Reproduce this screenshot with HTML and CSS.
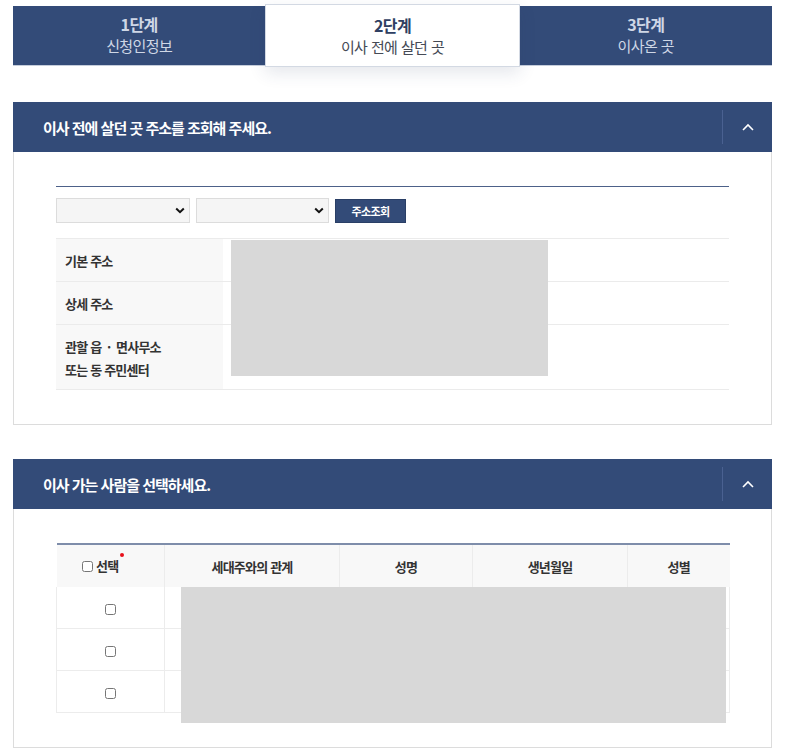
FILE: index.html
```html
<!DOCTYPE html>
<html lang="ko">
<head>
<meta charset="utf-8">
<title>전입신고</title>
<link rel="stylesheet" href="styles.css">
</head>
<body>
<div class="page">
  <ol class="steps">
    <li class="step">
      <strong class="step-no">1단계</strong>
      <span class="step-name">신청인정보</span>
    </li>
    <li class="step step-active">
      <strong class="step-no">2단계</strong>
      <span class="step-name">이사 전에 살던 곳</span>
    </li>
    <li class="step">
      <strong class="step-no">3단계</strong>
      <span class="step-name">이사온 곳</span>
    </li>
  </ol>

  <section class="panel panel-first">
    <div class="panel-head">
      <h2 class="panel-title">이사 전에 살던 곳 주소를 조회해 주세요.</h2>
      <button class="toggle" type="button" aria-label="접기">
        <svg width="12" height="8" viewBox="0 0 12 8"><path d="M1 7L6 2L11 7" fill="none" stroke="#fff" stroke-width="1.6"/></svg>
      </button>
    </div>
    <div class="panel-body">
      <div class="search-row">
        <div class="select-wrap select-a">
          <select class="select"><option></option></select>
          <svg class="select-arrow" width="10" height="7" viewBox="0 0 10 7"><path d="M1.2 1.5L5 5.2L8.8 1.5" fill="none" stroke="#111" stroke-width="2"/></svg>
        </div>
        <div class="select-wrap select-b">
          <select class="select"><option></option></select>
          <svg class="select-arrow" width="10" height="7" viewBox="0 0 10 7"><path d="M1.2 1.5L5 5.2L8.8 1.5" fill="none" stroke="#111" stroke-width="2"/></svg>
        </div>
        <button class="btn-search" type="button">주소조회</button>
      </div>
      <div class="addr-wrap">
        <table class="addr-table">
          <tr class="row-a"><th>기본 주소</th><td></td></tr>
          <tr class="row-a"><th>상세 주소</th><td></td></tr>
          <tr class="row-b"><th>관할 읍 &nbsp;·&nbsp; 면사무소<br>또는 동 주민센터</th><td></td></tr>
        </table>
        <div class="mask mask-addr"></div>
      </div>
    </div>
  </section>

  <section class="panel panel-second">
    <div class="panel-head">
      <h2 class="panel-title">이사 가는 사람을 선택하세요.</h2>
      <button class="toggle" type="button" aria-label="접기">
        <svg width="12" height="8" viewBox="0 0 12 8"><path d="M1 7L6 2L11 7" fill="none" stroke="#fff" stroke-width="1.6"/></svg>
      </button>
    </div>
    <div class="panel-body">
      <div class="people-wrap">
        <table class="people-table">
          <colgroup>
            <col class="c1"><col class="c2"><col class="c3"><col class="c4"><col class="c5">
          </colgroup>
          <thead>
            <tr>
              <th><label class="all"><input type="checkbox" class="chk chk-head"><span class="req">선택</span></label></th>
              <th>세대주와의 관계</th>
              <th>성명</th>
              <th>생년월일</th>
              <th>성별</th>
            </tr>
          </thead>
          <tbody>
            <tr><td><input type="checkbox" class="chk"></td><td></td><td></td><td></td><td></td></tr>
            <tr><td><input type="checkbox" class="chk"></td><td></td><td></td><td></td><td></td></tr>
            <tr><td><input type="checkbox" class="chk"></td><td></td><td></td><td></td><td></td></tr>
          </tbody>
        </table>
        <div class="mask mask-people"></div>
      </div>
    </div>
  </section>
</div>
</body>
</html>
```
FILE: styles.css
```css
* { box-sizing: border-box; }
html, body { margin: 0; padding: 0; background: #fff; }
body {
  font-family: "Noto Sans CJK KR", "Noto Sans", sans-serif;
  color: #333;
}
.page {
  width: 759px;
  margin: 0 0 0 13px;
  padding-top: 6px;
}

/* steps */
.steps {
  list-style: none;
  margin: 0;
  padding: 0;
  display: flex;
  height: 60px;
  background: #334b78;
  border-bottom: 1px solid #c5cddb;
}
.step {
  flex: 1 1 0;
  display: flex;
  flex-direction: column;
  align-items: center;
  padding-top: 7px;
  color: #cfd7e6;
  letter-spacing: -0.6px;
}
.step-no { font-size: 16px; font-weight: 700; line-height: 22px; }
.step-name { font-size: 15px; line-height: 22px; }
.step-active {
  margin: -2px 0 -2px 0;
  padding-top: 9px;
  background: #fff;
  border: 1px solid #d3d9e3;
  box-shadow: 0 6px 16px rgba(40, 60, 100, 0.12);
  position: relative;
  z-index: 1;
}
.step-active .step-no { color: #2f3f62; }
.step-active .step-name { color: #454a55; }

/* panels */
.panel-first { margin-top: 36px; }
.panel-second { margin-top: 34px; }
.panel-head {
  height: 50px;
  background: #334b78;
  display: flex;
  align-items: center;
  justify-content: space-between;
  padding-left: 30px;
}
.panel-title {
  margin: 0;
  font-size: 15px;
  font-weight: 700;
  color: #fff;
  letter-spacing: -1px;
}
.toggle {
  width: 50px;
  height: 34px;
  border: 0;
  border-left: 1px solid #4a6191;
  background: transparent;
  padding: 0;
  display: flex;
  align-items: center;
  justify-content: center;
}
.toggle svg { display: block; margin-top: -1px; }
.panel-body {
  border: 1px solid #dcdcdc;
  border-top: 0;
  padding: 34px 42px 34px 42px;
}

/* search */
.search-row {
  border-top: 1px solid #4d6189;
  padding-top: 11px;
  display: flex;
  align-items: flex-start;
  gap: 6px;
}
.select-wrap { position: relative; height: 25px; }
.select-a { width: 134px; }
.select-b { width: 133px; }
.select {
  appearance: none;
  -webkit-appearance: none;
  display: block;
  width: 100%;
  height: 25px;
  background: #f5f5f5;
  border: 1px solid #dcdcdc;
  border-radius: 0;
  margin: 0;
}
.select-arrow {
  position: absolute;
  right: 5px;
  top: 9px;
}
.btn-search {
  width: 71px;
  height: 24px;
  margin-top: 1px;
  background: #334b78;
  border: 1px solid #2a3f66;
  color: #fff;
  font-family: inherit;
  font-size: 11px;
  font-weight: 700;
  letter-spacing: -0.6px;
  padding: 0;
}

/* address table */
.addr-wrap { position: relative; margin-top: 15px; }
.addr-table {
  width: 100%;
  border-collapse: collapse;
  border-top: 1px solid #ebebeb;
}
.addr-table th, .addr-table td {
  border-bottom: 1px solid #ebebeb;
  padding: 0;
}
.addr-table th {
  width: 167px;
  background: #f8f8f8;
  text-align: left;
  padding-left: 9px;
  font-size: 13px;
  font-weight: 700;
  color: #333;
  line-height: 23px;
  letter-spacing: -0.8px;
}
.row-a { height: 43px; }
.row-b { height: 65px; }
.row-b th { padding-top: 2px; }

.mask { position: absolute; background: #d8d8d8; }
.mask-addr { left: 175px; top: 2px; width: 317px; height: 136px; }

/* people table */
.people-wrap { position: relative; }
.people-table {
  width: 100%;
  border-collapse: collapse;
  border-top: 2px solid #7e8daa;
  table-layout: fixed;
}
.c1 { width: 108px; }
.c2 { width: 175px; }
.c3 { width: 133px; }
.c4 { width: 155px; }
.c5 { width: 102px; }
.people-table th {
  height: 43px;
  background: #f8f8f8;
  border-left: 1px solid #ececec;
  font-size: 13px;
  font-weight: 700;
  color: #333;
  letter-spacing: -0.8px;
  padding: 0;
}
.people-table th:first-child { border-left: 0; }
.people-table td {
  border: 1px solid #ececec;
  border-top: 0;
  text-align: center;
  padding: 0;
}
.people-table tbody tr { height: 42px; }
.people-table tbody tr:first-child { height: 41px; }
.all { display: inline-flex; align-items: center; gap: 3px; margin-left: -20px; }
.chk {
  width: 11px;
  height: 11px;
  margin: 0;
  vertical-align: middle;
}
.chk-head { margin-top: 1px; }
.req { position: relative; }
.req::after {
  content: "";
  position: absolute;
  right: -6px;
  top: -3px;
  width: 4px;
  height: 4px;
  border-radius: 50%;
  background: #e8101a;
}
.mask-people { left: 125px; top: 44px; width: 545px; height: 136px; }
```
